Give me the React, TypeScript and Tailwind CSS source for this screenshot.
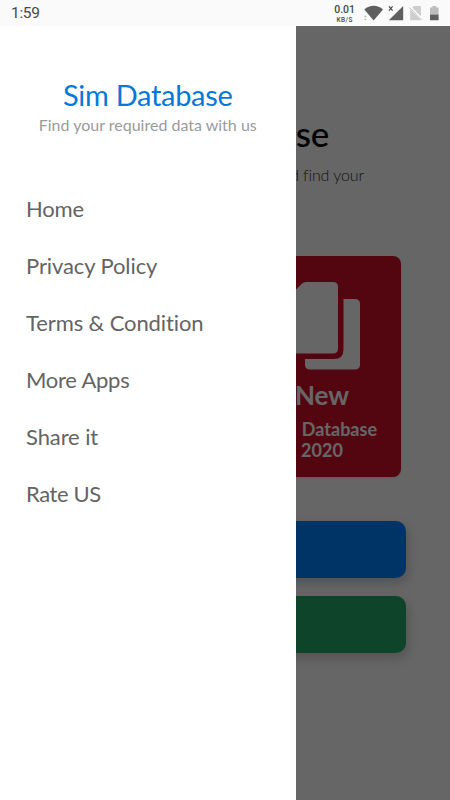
const menuItems = [
  { label: "Home", spacing: "tracking-[-0.2px]" },
  { label: "Privacy Policy", spacing: "tracking-[-0.1px]" },
  { label: "Terms & Condition", spacing: "tracking-[-0.1px]" },
  { label: "More Apps", spacing: "tracking-[-0.25px]" },
  { label: "Share it", spacing: "tracking-[-0.1px]" },
  { label: "Rate US", spacing: "tracking-[-0.4px]" }
];

function StatusIcons() {
  return (
    <svg width="75" height="16" viewBox="0 0 75 16" fill="none" aria-hidden="true">
      {/* wifi */}
      <path d="M0.3 4.6C5.8-0.4 13.5-0.4 19 4.6L9.6 15.4Z" fill="#5f5f5f" />
      <path d="M0 12.2 1.4 10.6 2.8 12.2ZM0 14 1.4 15.6 2.8 14Z" fill="#b4b4b4" />
      {/* mobile signal */}
      <path d="M39.2 1V15.2H24.8Z" fill="#5f5f5f" />
      <path d="M25 1.3 28.6 5.6M28.6 1.3 25 5.6" stroke="#4a4a4a" strokeWidth="1.2" />
      {/* missing sim */}
      <path d="M49.8 1H57V12.2L47.4 3.4Z" fill="#cdcdcd" />
      <path d="M46.2 4.6 57 15.2H46.2Z" fill="#cdcdcd" />
      <path d="M46.4 1.6 58.6 14" stroke="#fafafa" strokeWidth="1.2" />
      <path d="M45.2 2.4 57.8 15.2" stroke="#c2c2c2" strokeWidth="1" />
      {/* battery */}
      <path d="M66 2.6H68.4V1H72.2V2.6H74.6V9.5H66Z" fill="#bdbdbd" />
      <path d="M66 9.5H74.6V14.6Q74.6 15.2 74 15.2H66.6Q66 15.2 66 14.6Z" fill="#5f5f5f" />
    </svg>
  );
}

function StatusBar() {
  return (
    <header className="flex h-[26px] shrink-0 items-center justify-between bg-[#fafafa] pl-[11px] pr-[11px] font-[Roboto,sans-serif] text-[#484848]">
      <span className="pt-[2px] text-[15.5px] leading-none tracking-[-0.3px]">1:59</span>
      <div className="flex items-center gap-[9px]">
        <div className="flex flex-col items-center pt-px font-medium">
          <span className="text-[10.5px] leading-[12px]">0.01</span>
          <span className="text-[6.5px] leading-[8px] tracking-[0.4px]">KB/S</span>
        </div>
        <StatusIcons />
      </div>
    </header>
  );
}

function SimCards() {
  return (
    <svg width="78" height="90" viewBox="0 0 78 90" fill="#fff" aria-hidden="true">
      <path d="M23 0H50Q55 0 55 5V66.5Q55 71.5 50 71.5H5Q0 71.5 0 66.5V23Q0 21 1.5 19.5L19 1.5Q20.5 0 23 0Z" />
      <path d="M60.5 17H72Q77 17 77 22V82.5Q77 87.5 72 87.5H27Q22 87.5 22 82.5V77H51Q60.5 77 60.5 67.5Z" />
    </svg>
  );
}

function HomeContent() {
  return (
    <main className="flex h-full flex-col items-center overflow-hidden bg-white">
      <h1 className="mt-[86px] text-[35px] font-medium leading-[42px] tracking-[-0.1px] text-black">Sim Database</h1>
      <p className="mt-[12px] w-[278px] text-right text-[16px] font-light leading-[18px] tracking-[-0.1px] text-[#333]">
        and find your
      </p>

      <div className="mt-[72px] flex h-[221px] gap-[36px]">
        <div className="w-[158px] rounded-[8px] bg-[#d01028] shadow-sm" />
        <div className="flex w-[158px] flex-col items-center rounded-[8px] bg-[#d01028] pt-[26px] font-bold text-white shadow-sm">
          <SimCards />
          <span className="mt-[7px] text-[26px] leading-[32px]">New</span>
          <span className="mt-[8px] text-center text-[18px] leading-[21px] [word-spacing:1px]">
            Sim Database
            <br />
            2020
          </span>
        </div>
      </div>

      <div className="mt-[44px] flex w-[362px] flex-col gap-[18px]">
        <div className="h-[57px] rounded-[10px] bg-[#0080ff] shadow-[2px_5px_12px_rgba(0,0,0,0.2)]" />
        <div className="h-[56.5px] rounded-[10px] bg-[#23aa66] shadow-[2px_5px_12px_rgba(0,0,0,0.2)]" />
      </div>
    </main>
  );
}

function Drawer() {
  return (
    <aside className="absolute inset-y-0 left-0 flex w-[295.5px] flex-col bg-white">
      <div className="flex flex-col items-center pt-[51px]">
        <h2 className="text-[29px] leading-[36px] tracking-[-0.3px] text-[#0878d8]">Sim Database</h2>
        <p className="mt-[3px] text-[16px] leading-[18px] text-[#9b9b9b]">Find your required data with us</p>
      </div>
      <nav className="mt-[46px] flex flex-col pl-[26px]">
        {menuItems.map((item) => (
          <a key={item.label} href="#" className={`flex h-[57px] items-center text-[22px] text-[#646464] ${item.spacing}`}>
            {item.label}
          </a>
        ))}
      </nav>
    </aside>
  );
}

export default function App() {
  return (
    <div className="flex h-[800px] w-[450px] flex-col overflow-hidden font-[Lato,sans-serif] [font-variant-ligatures:none]">
      <StatusBar />
      <div className="relative min-h-0 flex-1">
        <HomeContent />
        <div className="absolute inset-0 bg-black/60" />
        <Drawer />
      </div>
    </div>
  );
}
